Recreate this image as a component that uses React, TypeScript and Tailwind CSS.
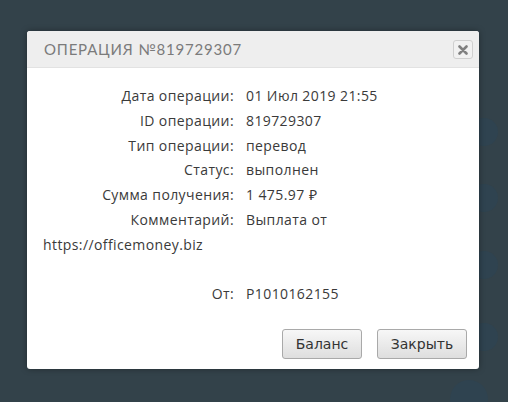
import React from "react";

const rows: [string, string][] = [
  ["Дата операции:", "01 Июл 2019 21:55"],
  ["ID операции:", "819729307"],
  ["Тип операции:", "перевод"],
  ["Статус:", "выполнен"],
  ["Сумма получения:", "1 475.97 ₽"],
  ["Комментарий:", "Выплата от"],
];

export default function App() {
  return (
    <div className="relative w-[508px] h-[402px] overflow-hidden bg-[#33424a]">
      {/* faint background circles */}
      <div className="absolute left-[470px] top-[118px] w-[28px] h-[28px] rounded-full bg-[#2f4350]" />
      <div className="absolute left-[470px] top-[184px] w-[28px] h-[28px] rounded-full bg-[#2f4350]" />
      <div className="absolute left-[470px] top-[251px] w-[28px] h-[28px] rounded-full bg-[#2f4350]" />
      <div className="absolute left-[470px] top-[323px] w-[28px] h-[28px] rounded-full bg-[#2f4350]" />
      <div className="absolute left-[450px] top-[380px] w-[38px] h-[38px] rounded-full bg-[#2f4350]" />

      <div className="absolute left-[27px] top-[31px] w-[452px] h-[338px] bg-white rounded-[3px] shadow-[0_0_6px_rgba(0,0,0,0.35)] flex flex-col overflow-hidden">
        <div className="h-[37px] bg-[#eeeeee] border-b border-[#e2e2e2] flex items-center justify-between pl-[17px] pr-[6px]">
          <span
            className="text-[15px] tracking-[0.8px] text-[#7b7b7b] uppercase"
            style={{ fontFamily: "Lato, 'DejaVu Sans', sans-serif" }}
          >
            ОПЕРАЦИЯ №819729307
          </span>
          <button className="w-[20px] h-[19px] mt-[1px] rounded-[3px] border border-[#cfcfcf] bg-[#f1f1f1] flex items-center justify-center">
            <svg width="10" height="10" viewBox="0 0 10 10">
              <path d="M1.5 1.5 L8.5 8.5 M8.5 1.5 L1.5 8.5" stroke="#808080" strokeWidth="2.6" strokeLinecap="round" />
            </svg>
          </button>
        </div>

        <div
          className="flex-1 pl-[16px] pt-[16px] text-[14px] leading-[24.8px] tracking-[0.4px] text-[#3a3a3a]"
          style={{ fontFamily: "'Open Sans', sans-serif" }}
        >
          {rows.map(([k, v]) => (
            <div key={k} className="flex">
              <div className="w-[191px] text-right">{k}</div>
              <div className="pl-[12px]">{v}</div>
            </div>
          ))}
          <div>https://officemoney.biz</div>
          <div className="h-[24.8px]" />
          <div className="flex">
            <div className="w-[191px] text-right">От:</div>
            <div className="pl-[12px]">P1010162155</div>
          </div>
        </div>

        <div
          className="flex justify-end gap-[15px] pr-[12px] pb-[10px] text-[14px] text-[#333]"
          style={{ fontFamily: "'DejaVu Sans', Verdana, sans-serif" }}
        >
          <button className="w-[80px] h-[30px] rounded-[3px] border border-[#a9a9a9] bg-gradient-to-b from-[#f7f7f7] to-[#dedede]">
            Баланс
          </button>
          <button className="w-[90px] h-[30px] rounded-[3px] border border-[#a9a9a9] bg-gradient-to-b from-[#f7f7f7] to-[#dedede]">
            Закрыть
          </button>
        </div>
      </div>
    </div>
  );
}
